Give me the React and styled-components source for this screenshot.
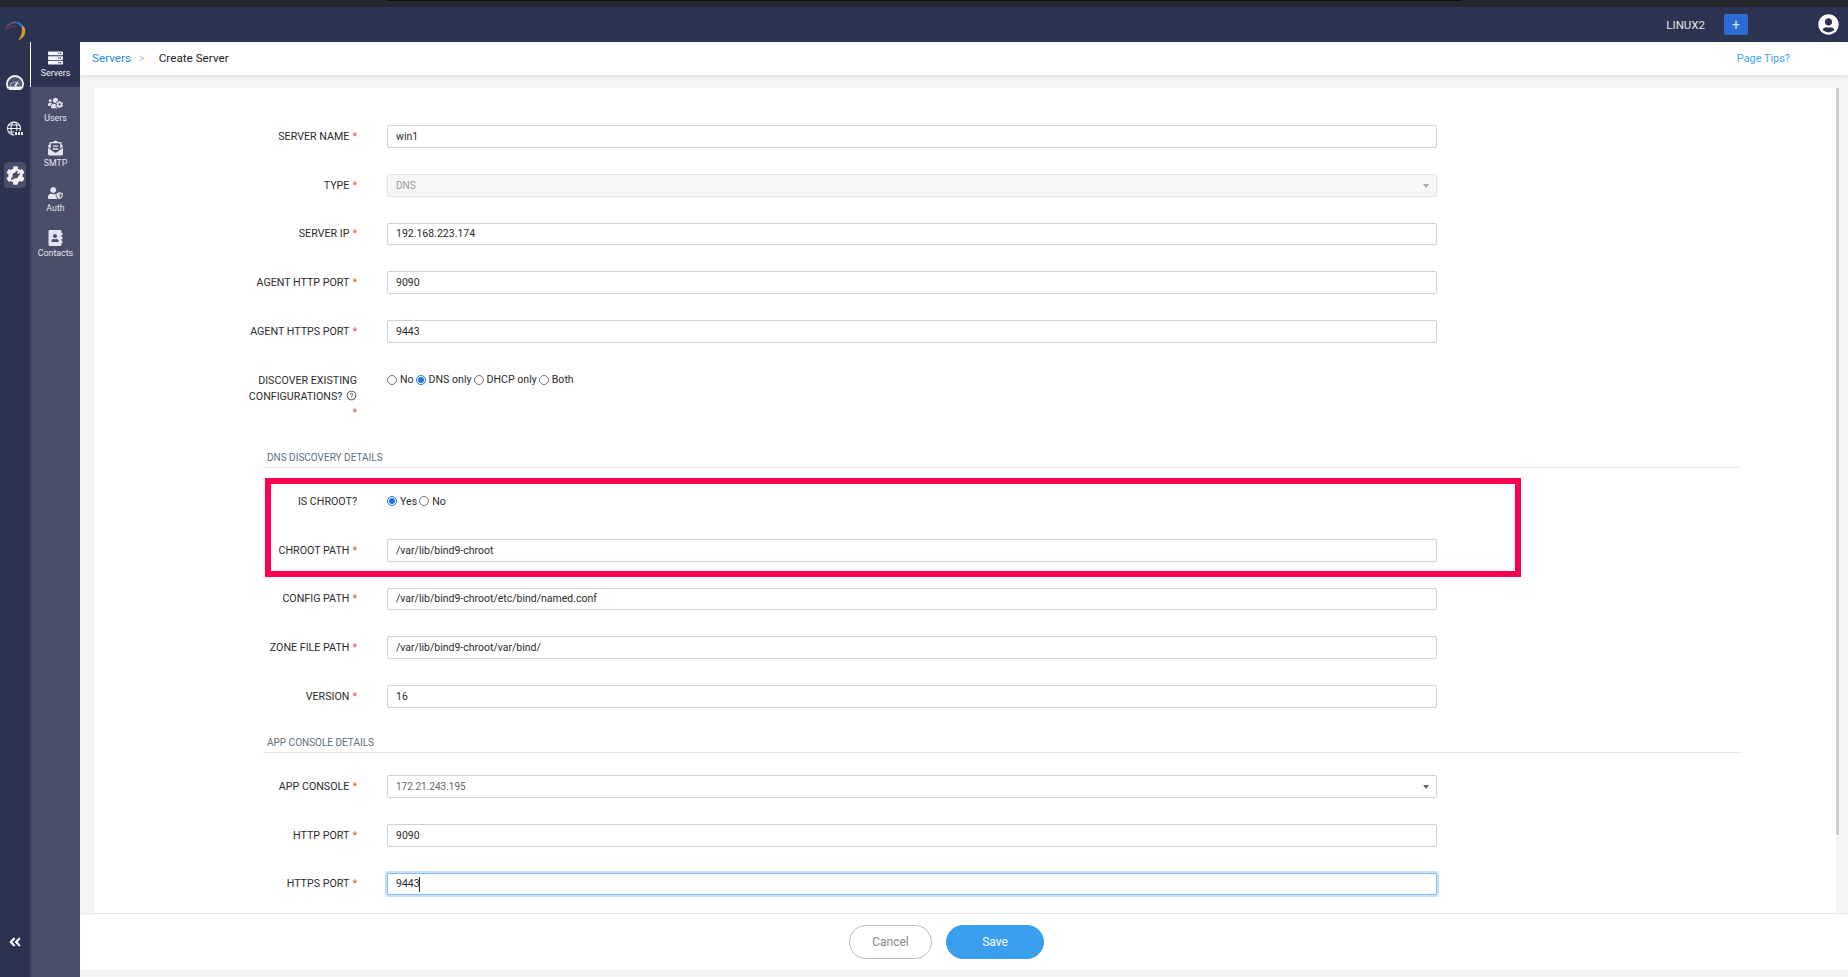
import React from 'react';
import styled, { createGlobalStyle } from 'styled-components';
import {
    FaServer,
    FaUsersCog,
    FaEnvelopeOpenText,
    FaUserShield,
    FaAddressBook,
    FaUserCircle,
    FaAngleDoubleLeft,
    FaCog,
    FaWrench,
} from 'react-icons/fa';
import { AiOutlineQuestionCircle } from 'react-icons/ai';

const GlobalStyle = createGlobalStyle`
    html, body {
        margin: 0;
        padding: 0;
        height: 100%;
        overflow: hidden;
        font-family: Roboto, "Liberation Sans", sans-serif;
        background: #f4f4f4;
    }
`;

const Page = styled.div`
    width: 1848px;
    height: 977px;
    display: flex;
    flex-direction: column;
    overflow: hidden;
`;

const TopStrip = styled.div`
    height: 7px;
    flex: none;
    background: #23282e;
    display: flex;
    justify-content: center;
`;

const TopNotch = styled.div`
    width: 1071px;
    height: 1px;
    background: #0c0c0c;
`;

const Shell = styled.div`
    flex: 1;
    display: flex;
    min-height: 0;
`;

const Rail = styled.nav`
    width: 30px;
    flex: none;
    background: #2c3350;
    display: flex;
    flex-direction: column;
    align-items: center;
    padding: 13px 0 28px;
    box-sizing: border-box;
`;

const RailList = styled.div`
    margin-top: 28px;
    display: flex;
    flex-direction: column;
    gap: 20px;
`;

const RailItem = styled.div`
    width: 22px;
    height: 26px;
    border-radius: 4px;
    position: relative;
    display: flex;
    align-items: center;
    justify-content: center;
    color: #f2f2f2;
    background: ${p => (p.$active ? '#4a4e69' : 'transparent')};
`;

const WrenchOverlay = styled.span`
    position: absolute;
    left: 7px;
    top: 9px;
    display: flex;
    color: #4a4e69;
    font-size: 9px;
`;

const Collapse = styled.div`
    margin-top: auto;
    display: flex;
    color: #fff;
    font-size: 14px;
`;

const Main = styled.div`
    flex: 1;
    min-width: 0;
    display: flex;
    flex-direction: column;
`;

const Header = styled.header`
    height: 35px;
    flex: none;
    background: #2c3350;
    display: flex;
    align-items: center;
    justify-content: flex-end;
    color: #e4e4e4;
    font-size: 11.5px;
`;

const Instance = styled.span`
    margin-right: 19px;
`;

const AddButton = styled.div`
    width: 24px;
    height: 21px;
    background: #2d6cd2;
    border-radius: 2px;
    color: #d6e4fa;
    font-size: 14px;
    display: flex;
    align-items: center;
    justify-content: center;
    margin-right: 70px;
`;

const Profile = styled.div`
    display: flex;
    color: #fff;
    font-size: 21px;
    margin-right: 9px;
`;

const Body = styled.div`
    flex: 1;
    min-height: 0;
    display: flex;
`;

const SubNav = styled.nav`
    width: 50px;
    flex: none;
    background: #4a4e69;
    border-left: 2px solid #41455f;
    box-sizing: border-box;
`;

const SubNavItem = styled.div`
    height: 45px;
    margin-left: -2px;
    padding-top: 8px;
    box-sizing: border-box;
    display: flex;
    flex-direction: column;
    align-items: center;
    color: ${p => (p.$active ? '#f2f4fb' : '#e2e5f0')};
    font-size: 8.8px;
    line-height: 14px;
    background: ${p => (p.$active ? '#2c3350' : 'transparent')};
    border-left: 1px solid ${p => (p.$active ? '#fff' : 'transparent')};

    svg {
        font-size: 15px;
        height: 16px;
        flex: none;
    }
`;

const Content = styled.div`
    flex: 1;
    min-width: 0;
    display: flex;
    flex-direction: column;
    background: #f4f4f4;
`;

const CrumbBar = styled.div`
    height: 33px;
    flex: none;
    background: #fff;
    box-shadow: 0 2px 3px rgba(0, 0, 0, 0.08);
    display: flex;
    align-items: center;
    padding: 0 58px 1px 12px;
    box-sizing: border-box;
    font-size: 11.7px;
    position: relative;
`;

const CrumbLink = styled.span`
    color: #1e88e5;
`;

const CrumbSep = styled.span`
    color: #bbb;
    margin: 0 14px 0 8px;
    font-size: 11px;
`;

const CrumbCurrent = styled.span`
    color: #222;
`;

const PageTips = styled.span`
    margin-left: auto;
    margin-top: 1px;
    color: #42a5f5;
    font-size: 10.9px;
`;

const Workspace = styled.div`
    flex: 1;
    min-height: 0;
    display: flex;
    align-items: flex-start;
    padding: 13px 9px 0 14px;
`;

const Card = styled.div`
    flex: 1;
    height: 100%;
    min-width: 0;
    background: #fff;
    overflow: hidden;
    padding: 37px 0 0 146px;
    box-sizing: border-box;
`;

const ScrollThumb = styled.div`
    width: 3px;
    height: 747px;
    flex: none;
    background: #cfcfcf;
`;

const Form = styled.form`
    width: 1501px;
    margin: 0;
`;

const Row = styled.div`
    display: grid;
    grid-template-columns: 117px 1050px;
    column-gap: 30px;
    margin-bottom: ${p => p.$gap || 26}px;
    padding-top: ${p => (p.$top ? 3 : 0)}px;
    align-items: ${p => (p.$top ? 'start' : 'center')};
    min-height: 22.8px;
`;

const Label = styled.label`
    text-align: right;
    font-size: 10.7px;
    line-height: 16px;
    padding-top: 1px;
    color: #2b2b2b;
`;

const Required = styled.span`
    color: #d9602a;
    margin-left: 3px;
    display: ${p => (p.$block ? 'block' : 'inline')};
`;

const HelpIcon = styled(AiOutlineQuestionCircle)`
    font-size: 11px;
    color: #444;
    vertical-align: -1px;
    margin-left: 1px;
`;

const Field = styled.div`
    position: relative;
    height: 22.8px;
`;

const TextInput = styled.input`
    display: block;
    width: 100%;
    height: 100%;
    box-sizing: border-box;
    padding: 0 8px;
    font: 10.5px Roboto, "Liberation Sans", sans-serif;
    color: #2b2b2b;
    background: #fff;
    border: 1px solid ${p => (p.$focused ? '#80bdff' : '#cfd2d8')};
    border-radius: 2px;
    outline: none;
    box-shadow: ${p => (p.$focused ? '0 0 0 2px rgba(128, 189, 255, 0.45)' : 'none')};
`;

const Caret = styled.span`
    position: absolute;
    left: 32px;
    top: 4px;
    width: 1px;
    height: 15px;
    background: #222;
`;

const SelectBox = styled.div`
    height: 100%;
    box-sizing: border-box;
    padding: 1px 8px 0;
    display: flex;
    align-items: center;
    justify-content: space-between;
    font-size: 10px;
    color: ${p => (p.$disabled ? '#9a9a9a' : '#666')};
    background: ${p => (p.$disabled ? '#f7f7f7' : '#fff')};
    border: 1px solid ${p => (p.$disabled ? '#e6e6e6' : '#cfd2d8')};
    border-radius: 2px;
`;

const SelectArrow = styled.span`
    width: 0;
    height: 0;
    margin-right: -1px;
    border-left: 3px solid transparent;
    border-right: 3px solid transparent;
    border-top: 4px solid ${p => (p.$disabled ? '#aaa' : '#666')};
`;

const RadioGroup = styled.div`
    display: flex;
    align-items: center;
    gap: 2px;
    height: 16px;
    font-size: 10.6px;
    color: #2b2b2b;
`;

const RadioOption = styled.label`
    display: flex;
    align-items: center;
    gap: 3px;
`;

const RadioInput = styled.input`
    width: 10px;
    height: 10px;
    margin: 0;
    accent-color: #1a73e8;
`;

const Section = styled.div`
    margin: 0 0 22px 23px;
    width: 1478px;
    height: 19px;
    box-sizing: border-box;
    padding: 2px 0 0 4px;
    border-bottom: 1px solid #e4e4e4;
    font-size: 10px;
    line-height: 14px;
    color: #5c6f80;
`;

const Highlighted = styled.div`
    position: relative;
`;

const Annotation = styled.div`
    position: absolute;
    left: 25px;
    top: -12px;
    width: 1256px;
    height: 99px;
    box-sizing: border-box;
    border: 6px solid #ff0050;
    pointer-events: none;
`;

const Footer = styled.footer`
    height: 57px;
    flex: none;
    background: #fff;
    border-top: 1px solid #e8e8e8;
    box-sizing: border-box;
    display: flex;
    align-items: center;
    justify-content: center;
    gap: 14px;
    padding-right: 35px;
    margin-bottom: 7px;
`;

const Button = styled.button`
    height: 34px;
    width: ${p => (p.$primary ? '98px' : '83px')};
    border-radius: 17px;
    font: 12px Roboto, "Liberation Sans", sans-serif;
    color: ${p => (p.$primary ? '#fff' : '#888')};
    background: ${p => (p.$primary ? '#3a9eee' : '#fff')};
    border: 1px solid ${p => (p.$primary ? '#3a9eee' : '#bbb')};
`;

function Logo() {
    return (
        <svg width="22" height="22" viewBox="0 0 22 22">
            <path d="M1 9C3 4 7 1.5 12 1.5V3C8 3 4 5 1 9Z" fill="#5b6074" />
            <path d="M10 1.5C15 1 19 4 20.5 8H18C16 5 13 3 10 2.5Z" fill="#2f6fc0" />
            <path d="M1 9.5C4 6 9 5 13 6.5 9 6 5 7 1 10Z" fill="#9c3340" />
            <path d="M17.5 6C19 6 20.5 7 21 9 22 14 19 19 14 20.5 17 17 19 12 17.5 6Z" fill="#e6952f" />
        </svg>
    );
}

function GaugeIcon() {
    return (
        <svg width="18" height="16" viewBox="0 0 18 16">
            <path d="M2.4 13.5A8 8 0 1 1 15.6 13.5" fill="#50556e" stroke="#f2f2f2" strokeWidth="1.8" />
            <path d="M4 10.5a5.4 5.4 0 0 1 10 0" fill="none" stroke="#e4e6ee" strokeWidth="1.2" strokeDasharray="1 1" />
            <path d="M8 10.4 12.8 5l-2.6 6.4Z" fill="#f2f2f2" />
            <rect x="2.5" y="11.5" width="13" height="3.5" rx="1" fill="#f2f2f2" />
        </svg>
    );
}

function GlobeIcon() {
    return (
        <svg width="18" height="16" viewBox="0 0 18 16">
            <g fill="none" stroke="#f2f2f2" strokeWidth="1.1">
                <circle cx="8" cy="7.5" r="6.5" />
                <ellipse cx="8" cy="7.5" rx="3" ry="6.5" />
                <path d="M1.5 7.5h13M2.5 4h11M2.5 11h11" />
            </g>
            <rect x="8" y="10" width="10" height="5" rx="1" fill="#2c3350" />
            <path d="M9 11h2v3H9ZM12 11h2v3h-2ZM15 11h2v3h-2Z" fill="#f2f2f2" />
        </svg>
    );
}

const NAV_ITEMS = [
    { name: 'Servers', Icon: FaServer, active: true },
    { name: 'Users', Icon: FaUsersCog },
    { name: 'SMTP', Icon: FaEnvelopeOpenText },
    { name: 'Auth', Icon: FaUserShield },
    { name: 'Contacts', Icon: FaAddressBook },
];

function InputRow({ label, value, focused }) {
    return (
        <Row>
            <Label>{label}<Required>*</Required></Label>
            <Field>
                <TextInput $focused={focused} value={value} readOnly />
                {focused && <Caret />}
            </Field>
        </Row>
    );
}

function SelectRow({ label, value, disabled }) {
    return (
        <Row>
            <Label>{label}<Required>*</Required></Label>
            <Field>
                <SelectBox $disabled={disabled}>
                    {value}
                    <SelectArrow $disabled={disabled} />
                </SelectBox>
            </Field>
        </Row>
    );
}

function Radios({ name, options, checked }) {
    return (
        <RadioGroup>
            {options.map(option => (
                <RadioOption key={option}>
                    <RadioInput type="radio" name={name} defaultChecked={option === checked} />
                    {option}
                </RadioOption>
            ))}
        </RadioGroup>
    );
}

export default function App() {
    return (
        <>
            <GlobalStyle />
            <Page>
                <TopStrip><TopNotch /></TopStrip>
                <Shell>
                    <Rail>
                        <Logo />
                        <RailList>
                            <RailItem><GaugeIcon /></RailItem>
                            <RailItem><GlobeIcon /></RailItem>
                            <RailItem $active>
                                <FaCog size={19} />
                                <WrenchOverlay><FaWrench /></WrenchOverlay>
                            </RailItem>
                        </RailList>
                        <Collapse><FaAngleDoubleLeft /></Collapse>
                    </Rail>
                    <Main>
                        <Header>
                            <Instance>LINUX2</Instance>
                            <AddButton>+</AddButton>
                            <Profile><FaUserCircle /></Profile>
                        </Header>
                        <Body>
                            <SubNav>
                                {NAV_ITEMS.map(({ name, Icon, active }) => (
                                    <SubNavItem key={name} $active={active}>
                                        <Icon />
                                        {name}
                                    </SubNavItem>
                                ))}
                            </SubNav>
                            <Content>
                                <CrumbBar>
                                    <CrumbLink>Servers</CrumbLink>
                                    <CrumbSep>&gt;</CrumbSep>
                                    <CrumbCurrent>Create Server</CrumbCurrent>
                                    <PageTips>Page Tips?</PageTips>
                                </CrumbBar>
                                <Workspace>
                                    <Card>
                                        <Form>
                                            <InputRow label="SERVER NAME" value="win1" />
                                            <SelectRow label="TYPE" value="DNS" disabled />
                                            <InputRow label="SERVER IP" value="192.168.223.174" />
                                            <InputRow label="AGENT HTTP PORT" value="9090" />
                                            <InputRow label="AGENT HTTPS PORT" value="9443" />
                                            <Row $top $gap={28}>
                                                <Label>
                                                    DISCOVER EXISTING CONFIGURATIONS? <HelpIcon />
                                                    <Required $block>*</Required>
                                                </Label>
                                                <Radios
                                                    name="discover"
                                                    options={['No', 'DNS only', 'DHCP only', 'Both']}
                                                    checked="DNS only"
                                                />
                                            </Row>

                                            <Section>DNS DISCOVERY DETAILS</Section>
                                            <Highlighted>
                                                <Annotation />
                                                <Row>
                                                    <Label>IS CHROOT?</Label>
                                                    <Radios name="chroot" options={['Yes', 'No']} checked="Yes" />
                                                </Row>
                                                <InputRow label="CHROOT PATH" value="/var/lib/bind9-chroot" />
                                            </Highlighted>
                                            <InputRow label="CONFIG PATH" value="/var/lib/bind9-chroot/etc/bind/named.conf" />
                                            <InputRow label="ZONE FILE PATH" value="/var/lib/bind9-chroot/var/bind/" />
                                            <InputRow label="VERSION" value="16" />

                                            <Section>APP CONSOLE DETAILS</Section>
                                            <SelectRow label="APP CONSOLE" value="172.21.243.195" />
                                            <InputRow label="HTTP PORT" value="9090" />
                                            <InputRow label="HTTPS PORT" value="9443" focused />
                                        </Form>
                                    </Card>
                                    <ScrollThumb />
                                </Workspace>
                                <Footer>
                                    <Button type="button">Cancel</Button>
                                    <Button type="button" $primary>Save</Button>
                                </Footer>
                            </Content>
                        </Body>
                    </Main>
                </Shell>
            </Page>
        </>
    );
}
